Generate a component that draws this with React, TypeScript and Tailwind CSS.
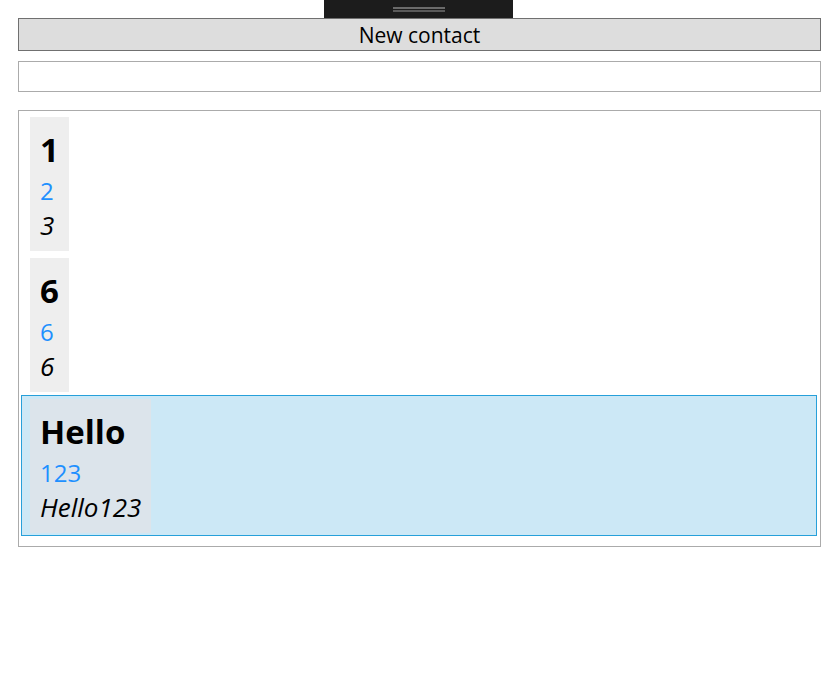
import React from "react";

const contacts = [
  { name: "1", phone: "2", note: "3" },
  { name: "6", phone: "6", note: "6" },
  { name: "Hello", phone: "123", note: "Hello123" },
];

export default function App() {
  const selected = 2;
  return (
    <div
      className="relative h-[686px] w-[838px] bg-white pl-[18px] pt-[18px]"
      style={{ fontFamily: '"Open Sans", "Noto Sans", sans-serif' }}
    >
      {/* debug toolbar overlay */}
      <div className="absolute left-[324px] top-0 flex h-[18px] w-[189px] flex-col items-center bg-[#1c1c1c] pt-[7px]">
        <div className="h-[2px] w-[52px] bg-[#6a6a6a]" />
        <div className="mt-[1px] h-[2px] w-[52px] bg-[#5a5a5a]" />
      </div>

      <button className="flex h-[33px] w-[803px] items-center justify-center border border-[#707070] bg-[#dddddd] pt-[1px] text-[21px] leading-none text-black">
        New contact
      </button>

      <input className="mt-[10px] block h-[31px] w-[803px] border border-[#ababab] bg-white px-1 outline-none" />

      <div className="mt-[18px] flex h-[437px] w-[803px] flex-col border border-[#ababab] pb-[2px] pl-[2px] pr-[3px] pt-[2px]">
        {contacts.map((c, i) => (
          <div
            key={i}
            className={`flex h-[141px] border pb-[2px] pl-[8px] pt-[3px] ${
              i === selected ? "border-[#26a0da] bg-[#cce8f6]" : "border-transparent"
            }`}
          >
            <div
              className={`flex flex-col px-[10px] pb-[10px] pt-[10px] ${
                i === selected ? "bg-[#dce4eb]" : "bg-[#eeeeee]"
              }`}
            >
              <span className="text-[33px] font-bold leading-[46px] text-black">{c.name}</span>
              <span className="text-[24px] leading-[36px] text-[#1e90ff]">{c.phone}</span>
              <span className="text-[26px] italic leading-[32px] text-black">{c.note}</span>
            </div>
          </div>
        ))}
      </div>
    </div>
  );
}
